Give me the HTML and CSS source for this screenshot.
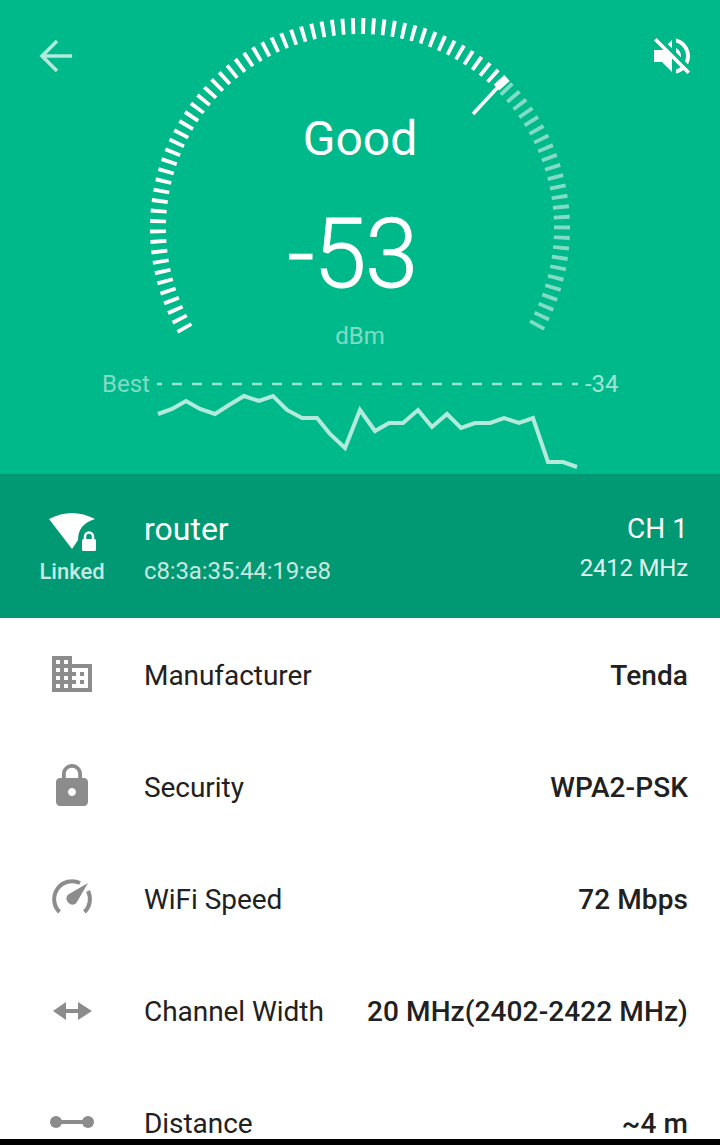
FILE: index.html
```html
<!DOCTYPE html>
<html lang="en">
<head>
  <meta charset="UTF-8" />
  <meta name="viewport" content="width=device-width, initial-scale=1.0"/>
  <title>Signal detail</title>
  <link rel="stylesheet" href="styles.css">
</head>
<body>

  <div class="app">
    <header class="signal">
      <!-- gauge dial: arcs are dashed so each dash reads as one tick -->
      <svg class="dial" width="720" height="360" viewBox="0 0 720 360">
        <path class="ticks ticks-on" d="M185.4 329.6 A202 202 0 0 1 496.5 79.1"/>
        <path class="ticks ticks-off" d="M505.3 87.7 A202 202 0 0 1 535.8 327.5"/>
        <line class="needle-head" x1="507" y1="78" x2="496.5" y2="87.5"/>
        <line class="needle" x1="498" y1="87" x2="473" y2="114"/>
      </svg>

      <div class="top-bar">
        <svg class="icon back" width="48" height="48" viewBox="0 0 48 48">
          <path d="M40 24H10M25 9L10 24L25 39"/>
        </svg>
        <svg class="icon mute" width="48" height="48" viewBox="0 0 24 24">
          <path d="M16.5 12c0-1.77-1.02-3.29-2.5-4.03v2.21l2.45 2.45c.03-.2.05-.41.05-.63zm2.5 0c0 .94-.2 1.82-.54 2.64l1.51 1.51C20.63 14.91 21 13.5 21 12c0-4.28-2.99-7.86-7-8.77v2.06c2.89.86 5 3.54 5 6.71zM4.27 3L3 4.27 7.73 9H3v6h4l5 5v-6.73l4.25 4.25c-.67.52-1.42.93-2.25 1.18v2.06c1.38-.31 2.63-.95 3.69-1.81L19.73 21 21 19.73l-9-9L4.27 3zM12 4L9.91 6.09 12 8.18V4z"/>
        </svg>
      </div>

      <div class="readout">
        <div class="quality">Good</div>
        <div class="value">-53</div>
        <div class="unit">dBm</div>
      </div>

      <div class="best">
        <span class="best-label">Best</span>
        <svg class="best-line" width="421" height="4" viewBox="0 0 421 4">
          <line x1="0" y1="2" x2="421" y2="2"/>
        </svg>
        <span class="best-value">-34</span>
      </div>

      <svg class="history" width="720" height="92" viewBox="0 390 720 92">
        <polyline points="158,413 172,408 186,400 200,408 215,413 229,404 244,395 259,400 273,395 287,409 302,417 317,417 330,433 345,447 360,409 375,430 389,422 403,422 418,409 432,426 447,413 461,427 475,422 490,422 504,417 519,422 533,417 548,461 563,461 577,466"/>
      </svg>
    </header>

    <section class="network">
      <div class="link-state">
        <svg class="wifi" width="48" height="40" viewBox="48 512 48 40">
          <path class="fan" d="M72 549L49 519Q72 507 95 519Q78 524 78 540Z"/>
          <rect class="lock-body" x="82" y="539" width="14" height="12" rx="1.5"/>
          <path class="lock-loop" d="M85 540V536.5a4 4 0 0 1 8 0V540"/>
        </svg>
        <span class="link-label">Linked</span>
      </div>
      <div class="network-name">
        <div class="ssid">router</div>
        <div class="mac">c8:3a:35:44:19:e8</div>
      </div>
      <div class="channel">
        <div class="channel-no">CH 1</div>
        <div class="channel-freq">2412 MHz</div>
      </div>
    </section>

    <ul class="details">
      <li class="row">
        <svg class="row-icon" width="48" height="48" viewBox="0 0 24 24">
          <path d="M12 7V3H2v18h20V7H12zM6 19H4v-2h2v2zm0-4H4v-2h2v2zm0-4H4V9h2v2zm0-4H4V5h2v2zm4 12H8v-2h2v2zm0-4H8v-2h2v2zm0-4H8V9h2v2zm0-4H8V5h2v2zm10 12h-8v-2h2v-2h-2v-2h2v-2h-2V9h8v10zm-2-8h-2v2h2v-2zm0 4h-2v2h2v-2z"/>
        </svg>
        <span class="row-label">Manufacturer</span>
        <span class="row-value">Tenda</span>
      </li>
      <li class="row">
        <svg class="row-icon" width="48" height="48" viewBox="0 0 24 24">
          <path d="M18 8h-1V6c0-2.76-2.24-5-5-5S7 3.24 7 6v2H6c-1.1 0-2 .9-2 2v10c0 1.1.9 2 2 2h12c1.1 0 2-.9 2-2V10c0-1.1-.9-2-2-2zm-6 9c-1.1 0-2-.9-2-2s.9-2 2-2 2 .9 2 2-.9 2-2 2zm3.1-9H8.9V6c0-1.71 1.39-3.1 3.1-3.1 1.71 0 3.1 1.39 3.1 3.1v2z"/>
        </svg>
        <span class="row-label">Security</span>
        <span class="row-value">WPA2-PSK</span>
      </li>
      <li class="row">
        <svg class="row-icon" width="48" height="48" viewBox="0 0 48 48">
          <path class="gauge-arc" d="M11.5 38A18 18 0 0 1 32 9M40 17A18 18 0 0 1 36.5 38"/>
          <path d="M40 9L28.2 29.2A6 6 0 0 1 19.8 20.8Z"/>
        </svg>
        <span class="row-label">WiFi Speed</span>
        <span class="row-value">72 Mbps</span>
      </li>
      <li class="row">
        <svg class="row-icon" width="48" height="48" viewBox="0 0 48 48">
          <polygon points="5,25 18,16 18,23 30,23 30,16 44,25 30,34 30,27 18,27 18,34"/>
        </svg>
        <span class="row-label">Channel Width</span>
        <span class="row-value">20 MHz(2402-2422 MHz)</span>
      </li>
      <li class="row">
        <svg class="row-icon" width="48" height="48" viewBox="0 0 48 48">
          <circle cx="8" cy="24" r="6"/>
          <circle cx="40" cy="24" r="6"/>
          <rect x="8" y="22" width="32" height="4"/>
        </svg>
        <span class="row-label">Distance</span>
        <span class="row-value">~4 m</span>
      </li>
    </ul>
  </div>

</body>
</html>
```
FILE: styles.css
```css
* {
  box-sizing: border-box;
}

html, body {
  height: 100%;
}

body {
  margin: 0;
  padding: 0;
  background-color: #000;
  font-family: Roboto, 'Noto Sans', sans-serif;
  overflow: hidden;
}

.app {
  height: 1139px;
  overflow: hidden;
  background-color: #fff;
  display: flex;
  flex-direction: column;
}

/* top green area */
.signal {
  position: relative;
  flex: none;
  height: 474px;
  background-color: #00b98b;
  color: #fff;
}

.dial {
  position: absolute;
  top: 0;
  left: 0;
}

.ticks {
  fill: none;
  stroke-width: 16;
}

.ticks-on {
  stroke: #fff;
  stroke-dasharray: 3.8 6.32;
}

.ticks-off {
  stroke: rgba(255, 255, 255, 0.5);
  stroke-dasharray: 3.8 6.37;
}

.needle-head {
  stroke: #fff;
  stroke-width: 8;
}

.needle {
  stroke: #fff;
  stroke-width: 3.5;
}

.top-bar {
  position: absolute;
  top: 32px;
  left: 32px;
  right: 24px;
  display: flex;
  justify-content: space-between;
}

.icon {
  display: block;
}

.back path {
  fill: none;
  stroke: rgba(255, 255, 255, 0.7);
  stroke-width: 3.5;
}

.mute path {
  fill: #fff;
}

.readout {
  position: relative;
  padding-top: 107px;
  display: flex;
  flex-direction: column;
  align-items: center;
}

.quality {
  font-size: 48px;
  line-height: 64px;
}

.value {
  font-size: 96px;
  font-weight: 300;
  letter-spacing: -1.5px;
  -webkit-text-stroke: 0.8px #fff;
  line-height: 112px;
  margin-top: 27px;
  margin-right: 16px;
}

.unit {
  font-size: 24px;
  line-height: 28px;
  margin-top: 12px;
  color: rgba(255, 255, 255, 0.5);
}

.best {
  position: relative;
  display: flex;
  align-items: center;
  margin-top: 27px;
  padding-left: 102px;
  font-size: 24px;
  line-height: 14px;
  color: rgba(255, 255, 255, 0.5);
}

.best-line {
  margin-left: 7px;
}

.best-line line {
  stroke: rgba(255, 255, 255, 0.6);
  stroke-width: 2.5;
  stroke-dasharray: 10 10;
  stroke-dashoffset: 5;
}

.best-value {
  margin-left: 7px;
  color: rgba(255, 255, 255, 0.65);
}

.history {
  display: block;
  position: relative;
}

.history polyline {
  fill: none;
  stroke: rgba(255, 255, 255, 0.7);
  stroke-width: 4;
}

/* darker band with the network */
.network {
  flex: none;
  height: 144px;
  background-color: #009974;
  color: #fff;
  display: flex;
  align-items: center;
  padding: 0 32px;
}

.link-state {
  width: 80px;
  flex: none;
  display: flex;
  flex-direction: column;
  align-items: center;
  padding-top: 4px;
}

.wifi {
  display: block;
}

.fan, .lock-body {
  fill: #fff;
}

.lock-loop {
  fill: none;
  stroke: #fff;
  stroke-width: 2.5;
}

.link-label {
  font-size: 22px;
  font-weight: 500;
  line-height: 26px;
  margin-top: 7px;
  color: rgba(255, 255, 255, 0.8);
}

.network-name {
  margin-left: 32px;
  flex: 1;
  padding-top: 2px;
}

.ssid {
  font-size: 32px;
  line-height: 40px;
}

.mac {
  font-size: 24px;
  letter-spacing: -0.12px;
  line-height: 30px;
  margin-top: 7px;
  color: rgba(255, 255, 255, 0.8);
}

.channel {
  text-align: right;
  padding-top: 3px;
}

.channel-no {
  font-size: 28px;
  line-height: 32px;
}

.channel-freq {
  font-size: 24px;
  letter-spacing: -0.2px;
  line-height: 30px;
  margin-top: 8px;
  color: rgba(255, 255, 255, 0.9);
}

/* white list */
.details {
  list-style: none;
  margin: 0;
  padding: 0;
  flex: none;
}

.row {
  height: 112px;
  display: flex;
  align-items: center;
  padding: 0 32px 0 48px;
  font-size: 28px;
  color: #212121;
}

.row-icon {
  flex: none;
  fill: #8c8c8c;
}

.gauge-arc {
  fill: none;
  stroke: #8c8c8c;
  stroke-width: 4;
}

.row-label {
  margin-left: 48px;
  flex: 1;
  letter-spacing: -0.05px;
  padding-top: 2px;
}

.row-value {
  font-weight: 500;
  letter-spacing: 0.1px;
  padding-top: 2px;
}
```
